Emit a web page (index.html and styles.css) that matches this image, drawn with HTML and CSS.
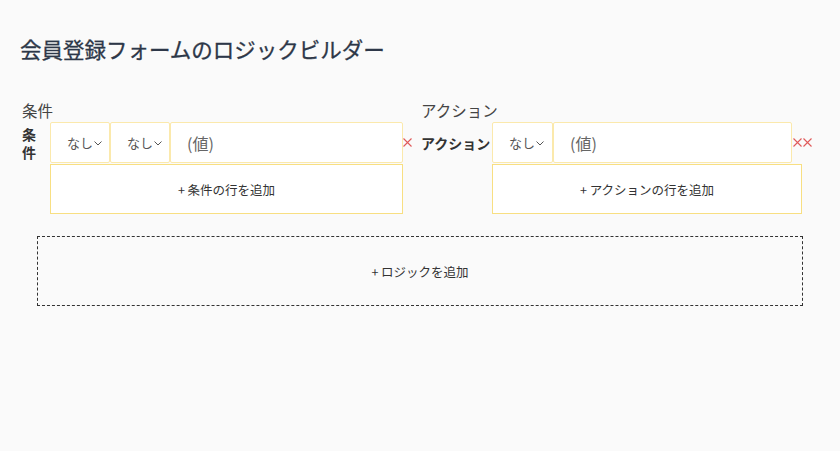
FILE: index.html
```html
<!DOCTYPE html>
<html lang="ja">
<head>
<meta charset="UTF-8">
<title>会員登録フォームのロジックビルダー</title>
<link rel="stylesheet" href="styles.css">
</head>
<body>
<h1 class="title">会員登録フォームのロジックビルダー</h1>
<div class="builder">
    <section class="panel panel-conditions">
        <h2 class="panel-title">条件</h2>
        <div class="row">
            <span class="row-label">条件</span>
            <div class="fields">
                <div class="select">なし<svg class="chevron" width="8" height="5" viewBox="0 0 8 5"><path d="M0.5 0.5 L4 4 L7.5 0.5" fill="none" stroke="#555" stroke-width="1"/></svg></div>
                <div class="select">なし<svg class="chevron" width="8" height="5" viewBox="0 0 8 5"><path d="M0.5 0.5 L4 4 L7.5 0.5" fill="none" stroke="#555" stroke-width="1"/></svg></div>
                <input class="value" type="text" placeholder="(値)">
            </div>
            <button class="remove" title="削除"><svg width="9" height="9" viewBox="0 0 9 9"><path d="M0.5 0.5 L8.5 8.5 M8.5 0.5 L0.5 8.5" stroke="#e05a5a" stroke-width="1.1"/></svg></button>
        </div>
        <button class="add-row">+ 条件の行を追加</button>
    </section>
    <section class="panel panel-actions">
        <h2 class="panel-title">アクション</h2>
        <div class="row">
            <span class="row-label">アクション</span>
            <div class="fields">
                <div class="select select-wide">なし<svg class="chevron" width="8" height="5" viewBox="0 0 8 5"><path d="M0.5 0.5 L4 4 L7.5 0.5" fill="none" stroke="#555" stroke-width="1"/></svg></div>
                <input class="value" type="text" placeholder="(値)">
            </div>
            <button class="remove" title="削除"><svg width="9" height="9" viewBox="0 0 9 9"><path d="M0.5 0.5 L8.5 8.5 M8.5 0.5 L0.5 8.5" stroke="#e05a5a" stroke-width="1.1"/></svg></button>
            <button class="remove" title="削除"><svg width="9" height="9" viewBox="0 0 9 9"><path d="M0.5 0.5 L8.5 8.5 M8.5 0.5 L0.5 8.5" stroke="#e05a5a" stroke-width="1.1"/></svg></button>
        </div>
        <button class="add-row">+ アクションの行を追加</button>
    </section>
</div>
<button class="add-logic">+ ロジックを追加</button>
</body>
</html>
```

FILE: styles.css
```css
body {
    margin: 0;
    padding: 0 20px;
    background-color: #fafafa;
    color: #333;
    font-family: 'Noto Sans CJK JP', 'Noto Sans', sans-serif;
}
.title {
    margin: 0;
    padding-top: 32px;
    font-size: 21.5px;
    line-height: 33px;
    font-weight: 400;
    color: #2d3748;
    -webkit-text-stroke: 0.3px #2d3748;
}
.builder {
    display: flex;
    gap: 9px;
    margin-top: 35px;
    padding-left: 2px;
}
.panel-conditions {
    width: 390px;
}
.panel-actions {
    width: 391px;
}
.panel-title {
    margin: 0 0 2px;
    font-size: 15.5px;
    line-height: 20px;
    font-weight: 400;
    color: #444;
}
.row {
    display: flex;
    align-items: center;
}
.row-label {
    font-size: 14px;
    line-height: 18px;
    font-weight: 700;
    color: #333;
}
.panel-conditions .row-label {
    width: 14px;
    margin-right: 14px;
}
.panel-actions .row-label {
    width: 71px;
    white-space: nowrap;
}
.fields {
    display: flex;
    flex: 1;
    height: 41px;
}
.select {
    display: flex;
    align-items: center;
    box-sizing: border-box;
    width: 60px;
    padding-left: 16px;
    background: #fff;
    border: 1px solid #fbe9ac;
    border-radius: 2px;
    font-size: 13px;
    color: #555;
    cursor: pointer;
}
.select-wide {
    width: 61px;
}
.chevron {
    margin-left: 1px;
    margin-top: 1px;
}
.value {
    flex: 1;
    min-width: 0;
    box-sizing: border-box;
    margin: 0;
    padding: 0 0 0 16px;
    background: #fff;
    border: 1px solid #fbe9ac;
    border-radius: 2px;
    font-family: inherit;
    font-size: 16px;
    color: #555;
    outline: none;
}
.value::placeholder {
    color: #666;
}
.remove {
    display: flex;
    align-items: center;
    justify-content: center;
    width: 10px;
    height: 20px;
    padding: 0;
    margin: 0;
    border: none;
    background: none;
    cursor: pointer;
}
.panel-conditions .remove {
    width: 9px;
}
.add-row {
    display: block;
    box-sizing: border-box;
    height: 50px;
    margin-top: 1px;
    background: #fff;
    border: 1px solid #f8df82;
    font-family: inherit;
    font-size: 12.5px;
    color: #333;
    cursor: pointer;
}
.panel-conditions .add-row {
    width: 353px;
    margin-left: 28px;
}
.panel-actions .add-row {
    width: 310px;
    margin-left: 71px;
}
.add-logic {
    display: block;
    box-sizing: border-box;
    width: 766px;
    height: 70px;
    margin: 22px 0 0 17px;
    background: transparent;
    border: 1px dashed #333;
    font-family: inherit;
    font-size: 12.5px;
    color: #333;
    cursor: pointer;
}
```
